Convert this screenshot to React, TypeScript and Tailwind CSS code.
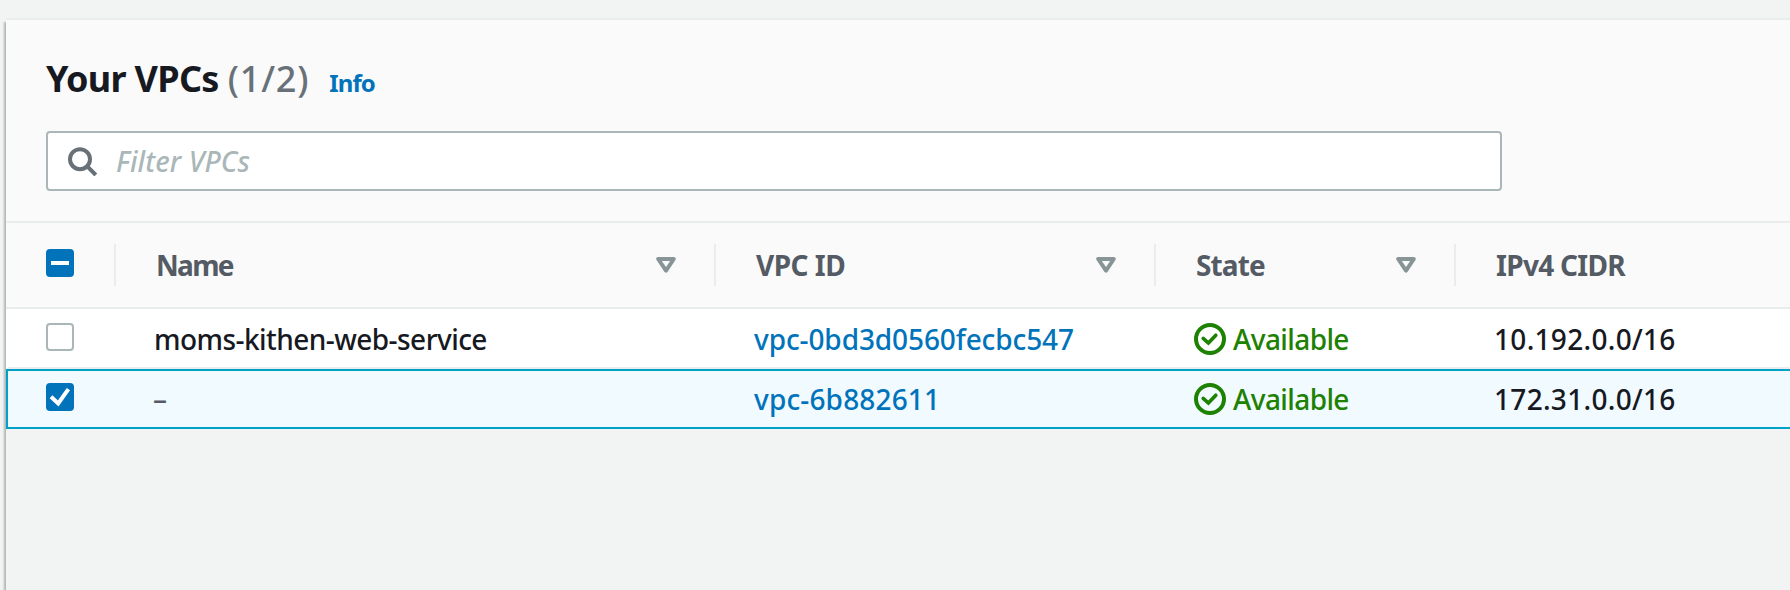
type Vpc = { name: string; id: string; idTracking: string; cidr: string; selected: boolean };

const vpcs: Vpc[] = [
  { name: "moms-kithen-web-service", id: "vpc-0bd3d0560fecbc547", idTracking: "tracking-[-0.1px]", cidr: "10.192.0.0/16", selected: false },
  { name: "–", id: "vpc-6b882611", idTracking: "tracking-[0.15px]", cidr: "172.31.0.0/16", selected: true },
];

function SearchIcon() {
  return (
    <svg className="ml-5 size-[30px] shrink-0" viewBox="0 0 30 30" fill="none" stroke="#687078" strokeWidth="4">
      <circle cx="12" cy="13.2" r="10" />
      <path d="M19 20.2 27.8 29" />
    </svg>
  );
}

function SortIcon() {
  return (
    <svg className="h-4 w-5 shrink-0" viewBox="0 0 20 16" fill="none" stroke="#879596" strokeWidth="4" strokeLinejoin="round">
      <path d="M2.2 2H17.8L10 13.6Z" />
    </svg>
  );
}

function StatusIcon() {
  return (
    <svg className="size-8 shrink-0" viewBox="0 0 32 32" fill="none" stroke="#1d8102" strokeWidth="4">
      <circle cx="16" cy="16" r="14" />
      <path d="M9.2 15.4 14.4 20 21.8 12.2" strokeLinecap="round" strokeWidth="3.6" />
    </svg>
  );
}

function Checkbox({ state }: { state: "off" | "on" | "mixed" }) {
  if (state === "off") return <div className="size-7 rounded-[4px] border-2 border-[#aab7b8] bg-white" />;
  return (
    <div className="size-7 rounded-[4px] bg-[#0073bb]">
      <svg className="size-7" viewBox="0 0 28 28" fill="none" stroke="#fff" strokeWidth="4">
        {state === "on" ? <path d="M5 13.8 12.2 20.4 22.4 6.2" /> : <path d="M5 14H23" />}
      </svg>
    </div>
  );
}

function HeaderCell({ label, width, tracking, sortable = true }: { label: string; width: string; tracking: string; sortable?: boolean }) {
  return (
    <div className={`flex h-[42px] shrink-0 items-center justify-between border-l-2 border-[#eaeded] pr-[38px] pl-10 ${width}`}>
      <span className={`text-[28px] leading-[42px] font-bold whitespace-nowrap text-[#545b64] ${tracking}`}>{label}</span>
      {sortable && <SortIcon />}
    </div>
  );
}

function Row({ vpc }: { vpc: Vpc }) {
  return (
    <div
      className={`flex h-[60px] border-2 border-r-0 text-[28px] leading-[36px] font-medium whitespace-nowrap ${
        vpc.selected ? "border-[#00a1c9] bg-[#f1faff]" : "border-t-0 border-l-transparent border-b-[#eaeded] bg-white pt-0.5"
      }`}
    >
      <div className="w-[108px] shrink-0 pt-3 pl-[38px]">
        <Checkbox state={vpc.selected ? "on" : "off"} />
      </div>
      <div className={`w-[600px] shrink-0 pt-2.5 ${vpc.selected ? "pl-[37px] text-[#545b64]" : "pl-[38px] tracking-[-0.55px] text-[#16191f]"}`}>{vpc.name}</div>
      <div className={`w-[440px] shrink-0 pt-2.5 pl-[38px] text-[#0073bb] ${vpc.idTracking}`}>{vpc.id}</div>
      <div className="flex w-[300px] shrink-0 gap-[7px] pt-3 pl-[38px] text-[#1d8102]">
        <StatusIcon />
        <span className="-mt-0.5 tracking-[-0.6px]">Available</span>
      </div>
      <div className="pt-2.5 pl-[38px] tracking-[0.3px] text-[#16191f]">{vpc.cidr}</div>
    </div>
  );
}

export default function App() {
  return (
    <div className="h-[590px] w-[1790px] overflow-hidden bg-[#f2f3f3] pt-5 pl-1.5 font-['Noto_Sans',sans-serif]">
      <div className="h-[570px] shadow-[0_-2px_0_0_#eaeded,-2px_2px_2px_0_rgba(0,0,0,0.26)]">
        <div className="h-[203px] border-b-2 border-[#eaeded] bg-[#fafafa] pl-10">
          <div className="flex h-[111px] items-baseline pt-[34px] leading-[50px] whitespace-nowrap">
            <h1 className="text-[36px] font-bold tracking-[-0.7px] text-[#16191f]">Your VPCs</h1>
            <span className="ml-[9px] text-[36px] font-medium tracking-[0.8px] text-[#687078]">(1/2)</span>
            <a className="ml-[20px] text-[24px] font-bold tracking-[-0.9px] text-[#0073bb]">Info</a>
          </div>
          <div className="flex h-[60px] w-[1456px] items-center rounded-[4px] border-2 border-[#aab7b8] bg-white">
            <SearchIcon />
            <span className="ml-[18px] text-[28px] leading-[36px] font-medium tracking-[0.1px] text-[#aab7b8] italic">Filter VPCs</span>
          </div>
        </div>
        <div className="flex h-[86px] border-b-2 border-[#eaeded] bg-[#fafafa] pt-[21px]">
          <div className="w-[108px] shrink-0 pt-[5px] pl-10">
            <Checkbox state="mixed" />
          </div>
          <HeaderCell label="Name" width="w-[600px]" tracking="tracking-[-1.7px]" />
          <HeaderCell label="VPC ID" width="w-[440px]" tracking="tracking-[-0.5px]" />
          <HeaderCell label="State" width="w-[300px]" tracking="tracking-[-0.9px]" />
          <HeaderCell label="IPv4 CIDR" width="w-[336px]" tracking="tracking-[-0.7px]" sortable={false} />
        </div>
        {vpcs.map((vpc) => (
          <Row key={vpc.id} vpc={vpc} />
        ))}
        <div className="h-[161px] bg-[#f2f3f3]" />
      </div>
    </div>
  );
}
